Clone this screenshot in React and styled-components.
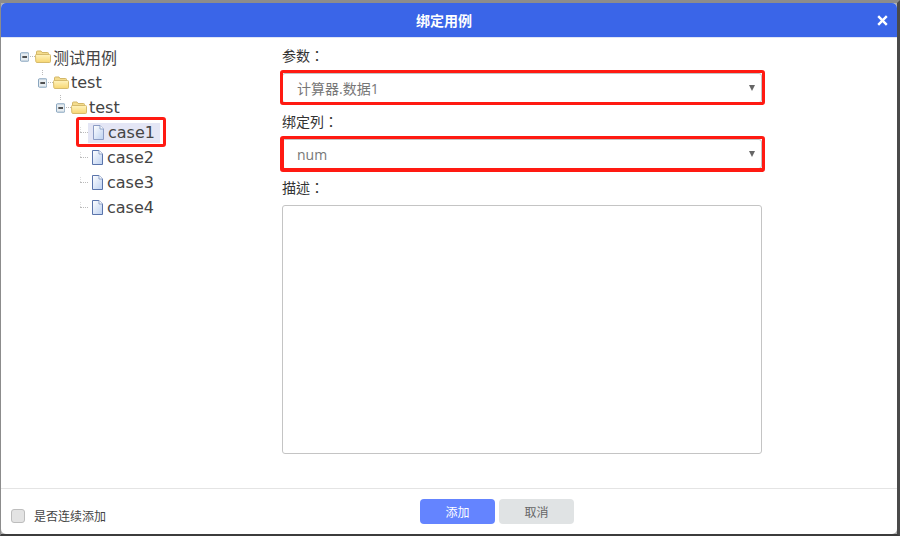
import styled, { createGlobalStyle } from 'styled-components'

const GlobalStyle = createGlobalStyle`
  html, body { margin: 0; padding: 0; background: #fff; }
  body { font-family: "Open Sans", "Noto Sans CJK SC", sans-serif; }
`

// Icons
const MinusBox = () => (
  <svg width="10" height="10" viewBox="0 0 10 10">
    <rect x="0.5" y="0.5" width="9" height="9" rx="1" fill="#e6ecf0" stroke="#7c9cb8" />
    <rect x="2.5" y="4.2" width="5" height="1.6" fill="#1c1c1c" />
  </svg>
)

const FolderIcon = () => (
  <svg width="16" height="14" viewBox="0 0 16 14">
    <defs>
      <linearGradient id="folder" x1="0" y1="0" x2="0" y2="1">
        <stop offset="0" stopColor="#fff3bd" />
        <stop offset="1" stopColor="#f7d671" />
      </linearGradient>
    </defs>
    <path d="M1.5 4 V2 Q1.5 1 2.5 1 H6 L7 2.5 H12.5 Q13.5 2.5 13.5 3.5 V5 H1.5 Z" fill="#f4dc8c" stroke="#d3b768" />
    <path d="M1 4.5 H14.5 Q15.5 4.5 15.5 5.5 V11.5 Q15.5 12.5 14.5 12.5 H2 Q1 12.5 .8 11.5 L.5 5.5 Q.5 4.5 1 4.5 Z" fill="url(#folder)" stroke="#d6bb6c" />
  </svg>
)

const FileIcon = ({ pale }) => (
  <svg width="13" height="15" viewBox="0 0 13 15">
    <defs>
      <linearGradient id="paper" x1="0" y1="0" x2="1" y2="1">
        <stop offset="0" stopColor="#fff" />
        <stop offset="1" stopColor="#bcd0f0" />
      </linearGradient>
    </defs>
    <path d="M1.5 .5 H8 L11.5 4 V14.5 H1.5 Z" fill="url(#paper)" stroke={pale ? '#8c9cc4' : '#5a74ab'} />
    <path d="M8 .5 V4 H11.5" fill="#fff" stroke="#8fa3c8" />
  </svg>
)

const CloseIcon = () => (
  <svg width="11" height="11" viewBox="0 0 11 11">
    <path d="M1.2 1.2 L9.8 9.8 M9.8 1.2 L1.2 9.8" stroke="#fff" strokeWidth="2.4" />
  </svg>
)

// Tree
const TreeFolder = ({ level, label }) => (
  <TreeRow $level={level}>
    <Switch $nested={level > 0}><MinusBox /><Dots /></Switch>
    <FolderIcon />
    <NodeName $folder>{label}</NodeName>
  </TreeRow>
)

const TreeLeaf = ({ label, selected }) => (
  <TreeRow $level={3}>
    <LeafDots />
    <LeafNode $selected={selected}>
      <FileIcon pale={selected} />
      <NodeName>{label}</NodeName>
    </LeafNode>
    {selected && <Marker />}
  </TreeRow>
)

const Field = ({ label, value, latin }) => (
  <>
    <FieldLabel>{label}</FieldLabel>
    <Select $tall={latin}>
      <SelectValue>{value}</SelectValue>
      <Caret />
    </Select>
  </>
)

const App = () => (
  <>
    <GlobalStyle />
    <Page>
      <Dialog>
        <Header>
          <Title>绑定用例</Title>
          <Close><CloseIcon /></Close>
        </Header>
        <Body>
          <Tree>
            <TreeFolder level={0} label="测试用例" />
            <TreeFolder level={1} label="test" />
            <TreeFolder level={2} label="test" />
            <TreeLeaf label="case1" selected />
            <TreeLeaf label="case2" />
            <TreeLeaf label="case3" />
            <TreeLeaf label="case4" />
          </Tree>
          <Form>
            <Field label="参数：" value="计算器.数据1" />
            <Field label="绑定列：" value="num" latin />
            <FieldLabel>描述：</FieldLabel>
            <TextArea />
          </Form>
        </Body>
        <Footer>
          <Continuous>
            <CheckBox />
            <span>是否连续添加</span>
          </Continuous>
          <Button $primary>添加</Button>
          <Button>取消</Button>
        </Footer>
      </Dialog>
    </Page>
  </>
)

// Styles
const Page = styled.div`
  width: 900px;
  height: 536px;
  overflow: hidden;
  background: #b0b0b0;
  box-sizing: border-box;
  border-top: 3px solid #8c8c8c;
  border-left: 1px solid #8c8c8c;
  border-right: 3px solid #4a4a4a;
  border-bottom: 2px solid #3c3c3c;
`

const Dialog = styled.div`
  height: 531px;
  display: flex;
  flex-direction: column;
  box-sizing: border-box;
  background: #fff;
  border-radius: 5px;
  overflow: hidden;
`

const Header = styled.div`
  height: 34px;
  flex: none;
  display: flex;
  align-items: center;
  justify-content: center;
  position: relative;
  background: #3a65e8;
  border-bottom: 1px solid #dfe5f5;
  box-sizing: content-box;
`

const Title = styled.div`
  color: #fff;
  font-size: 14px;
  font-weight: 700;
  margin-right: 10px;
`

const Close = styled.div`
  position: absolute;
  right: 9px;
  top: 12px;
  line-height: 0;
`

const Body = styled.div`
  flex: 1;
  display: flex;
  min-height: 0;
`

const Tree = styled.div`
  width: 281px;
  flex: none;
  box-sizing: border-box;
  padding: 7px 0 0 19px;
`

const TreeRow = styled.div`
  height: 25px;
  display: flex;
  align-items: center;
  position: relative;
  margin-left: ${p => p.$level * 18}px;

  &:first-child {
    height: 23px;
    margin-bottom: 2px;
  }
`

const Switch = styled.div`
  display: flex;
  align-items: center;
  width: 15px;
  flex: none;
  line-height: 0;
  position: relative;

  &::before {
    content: "";
    display: ${p => (p.$nested ? 'block' : 'none')};
    position: absolute;
    left: 4px;
    top: -8px;
    height: 5px;
    border-left: 1px dotted #bbb;
  }
`

const Dots = styled.span`
  width: 5px;
  margin-left: 1px;
  border-top: 1px dotted #bbb;
`

const LeafDots = styled.span`
  width: 8px;
  flex: none;
  margin-left: 6px;
  border-top: 1px dotted #bbb;
  position: relative;

  &::before {
    content: "";
    position: absolute;
    left: 0;
    top: -6px;
    height: 5px;
    border-left: 1px dotted #ddd;
  }
`

const LeafNode = styled.div`
  display: flex;
  align-items: center;
  height: 20px;
  padding: 0 5px 0 ${p => (p.$selected ? 4 : 3)}px;
  background: ${p => (p.$selected ? '#e4e6f5' : 'transparent')};
`

const NodeName = styled.span`
  font-family: "DejaVu Sans", "Noto Sans CJK SC", sans-serif;
  font-size: 16px;
  color: #444;
  margin-left: ${p => (p.$folder ? 2 : 3)}px;
`

const Marker = styled.div`
  position: absolute;
  left: 2px;
  top: -3px;
  width: 90px;
  height: 30px;
  box-sizing: border-box;
  border: 3px solid #ff1a12;
  border-radius: 3px;
`

const Form = styled.div`
  width: 480px;
  flex: none;
  padding-top: 9px;
`

const FieldLabel = styled.div`
  height: 17px;
  line-height: 17px;
  font-family: "Open Sans", "Noto Sans CJK TC", sans-serif;
  font-size: 14px;
  color: #333;
  margin-bottom: 9px;
`

const Select = styled.div`
  height: 30px;
  margin-bottom: 10px;
  box-sizing: border-box;
  display: flex;
  align-items: center;
  justify-content: space-between;
  padding: 0 6px 0 14px;
  background: #fff;
  border: 1px solid #c4c4c4;
  border-radius: 3px;
  position: relative;

  /* red annotation drawn over the field */
  &::after {
    content: "";
    position: absolute;
    top: -4px;
    left: -3px;
    right: -4px;
    bottom: ${p => (p.$tall ? -4 : -3)}px;
    border: 3px solid #ff1a12;
    border-left-width: ${p => (p.$tall ? 4 : 3)}px;
    border-bottom-width: ${p => (p.$tall ? 4 : 3)}px;
    border-radius: 3px;
  }
`

const SelectValue = styled.span`
  font-size: 14px;
  color: #777;
`

const Caret = styled.span`
  width: 0;
  height: 0;
  border-left: 3px solid transparent;
  border-right: 3px solid transparent;
  border-top: 6px solid #666;
`

const TextArea = styled.div`
  height: 249px;
  box-sizing: border-box;
  border: 1px solid #c4c4c4;
  border-radius: 3px;
`

const Footer = styled.div`
  height: 46px;
  flex: none;
  display: flex;
  align-items: flex-start;
  justify-content: center;
  gap: 4px;
  padding: 10px 0 0 96px;
  box-sizing: border-box;
  position: relative;
  border-top: 1px solid #e4e4e4;
`

const Continuous = styled.div`
  position: absolute;
  left: 10px;
  top: 18px;
  display: flex;
  align-items: center;
  gap: 9px;
  font-size: 12px;
  color: #444;
`

const CheckBox = styled.span`
  width: 12px;
  height: 12px;
  background: #e3e3e3;
  border: 1px solid #bdbdbd;
  border-radius: 3px;
`

const Button = styled.div`
  width: 75px;
  height: 25px;
  display: flex;
  align-items: center;
  justify-content: center;
  font-size: 12px;
  border-radius: 4px;
  color: ${p => (p.$primary ? '#fff' : '#666')};
  background: ${p => (p.$primary ? '#6484ff' : '#e0e3e4')};
`

export default App
